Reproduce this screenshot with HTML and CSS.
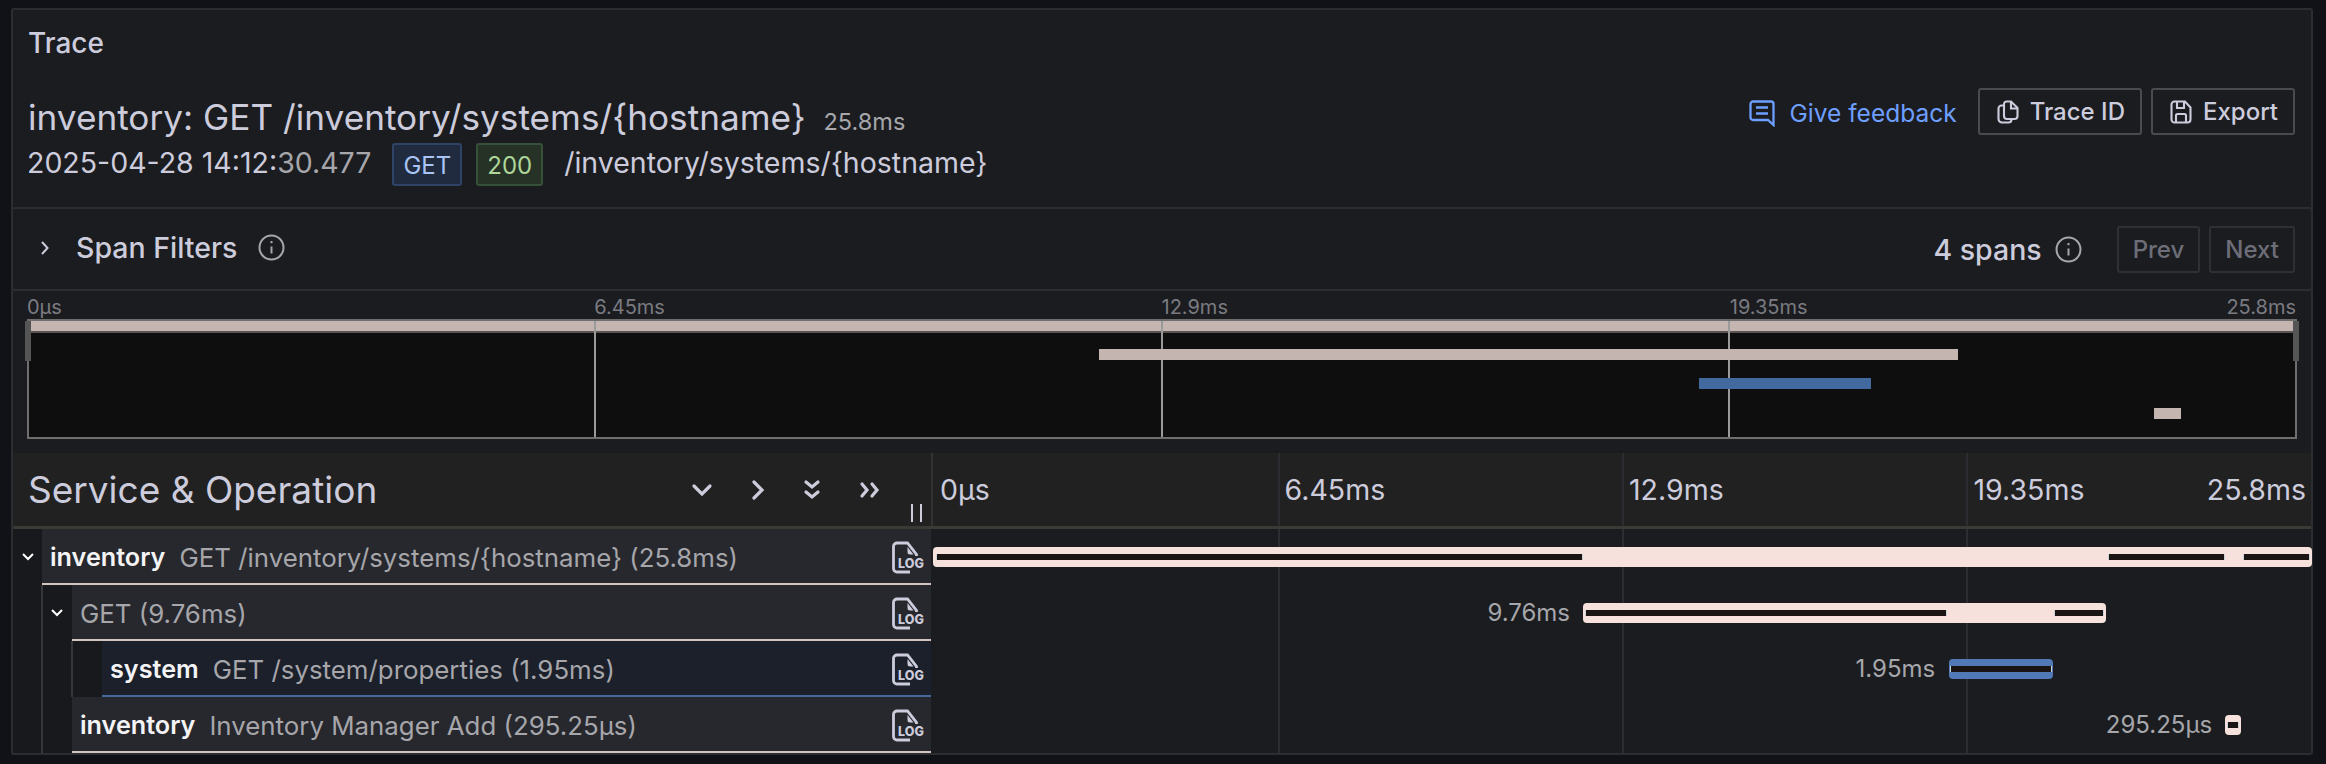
FILE: index.html
```html
<!DOCTYPE html>
<html lang="en">
<head>
  <meta charset="UTF-8">
  <meta name="viewport" content="width=device-width, initial-scale=1.0">
  <title>Trace</title>
  <link rel="stylesheet" href="styles.css">
</head>
<body>

  <main class="panel">
    <h2 class="panel-title">Trace</h2>

    <header class="trace-head">
      <div class="trace-info">
        <div class="trace-name">inventory: GET /inventory/systems/{hostname} <small>25.8ms</small></div>
        <div class="trace-meta">
          <span class="trace-date">2025-04-28 14:12:<em>30.477</em></span>
          <span class="tag tag-blue">GET</span>
          <span class="tag tag-green">200</span>
          <span class="trace-path">/inventory/systems/{hostname}</span>
        </div>
      </div>
      <div class="trace-actions">
        <a class="feedback">
          <svg width="28" height="28" viewBox="0 0 28 28" fill="none" stroke="currentColor" stroke-width="2.300"><path d="M5 2.500h18a2.500 2.500 0 0 1 2.500 2.500v21l-5.500-5H5A2.500 2.500 0 0 1 2.500 18.500V5A2.500 2.500 0 0 1 5 2.500Z"/><path d="M8 8.500h12M8 14.500h12"/></svg>
          Give feedback
        </a>
        <button class="btn">
          <svg width="22" height="24" viewBox="0 0 22 24" fill="none" stroke="currentColor" stroke-width="2.100"><path d="M7 5.500H4.500A3 3 0 0 0 1.500 8.500V19a3.500 3.500 0 0 0 3.500 3.500h6.500a3 3 0 0 0 3-3V19"/><path d="M7 4a2.500 2.500 0 0 1 2.500-2.500H14L20.500 8V16a3 3 0 0 1-3 3H10A3 3 0 0 1 7 16Z"/><path d="M14 2v6.500h6"/></svg>
          Trace ID
        </button>
        <button class="btn">
          <svg width="22" height="24" viewBox="0 0 22 24" fill="none" stroke="currentColor" stroke-width="2.100"><path d="M4.500 1.500H15L20.500 7.500V19.500a3 3 0 0 1-3 3H4.500a3 3 0 0 1-3-3V4.500a3 3 0 0 1 3-3Z"/><path d="M7 2v6h7V2"/><path d="M6 22v-6.500a1.500 1.500 0 0 1 1.500-1.500h7a1.500 1.500 0 0 1 1.500 1.500V22"/></svg>
          Export
        </button>
      </div>
    </header>

    <section class="filters">
      <div class="filters-left">
        <svg class="chev" width="12" height="16" viewBox="0 0 12 16" fill="none" stroke="currentColor" stroke-width="2"><path d="M3 2l5.500 6-5.500 6"/></svg>
        <span>Span Filters</span>
        <svg class="info" width="27" height="27" viewBox="0 0 27 27" fill="none" stroke="#a6a6ab" stroke-width="2"><circle cx="13.500" cy="13.500" r="12"/><path d="M13.500 12.500v7M13.500 7v2.200"/></svg>
      </div>
      <div class="filters-right">
        <span class="span-count">4 spans</span>
        <svg class="info" width="27" height="27" viewBox="0 0 27 27" fill="none" stroke="#a6a6ab" stroke-width="2"><circle cx="13.500" cy="13.500" r="12"/><path d="M13.500 12.500v7M13.500 7v2.200"/></svg>
        <button class="btn btn-off prev">Prev</button>
        <button class="btn btn-off">Next</button>
      </div>
    </section>

    <section class="mini">
      <div class="ticks mini-ticks">
        <span>0µs</span><span>6.45ms</span><span>12.9ms</span>
        <div class="ticks-end"><span>19.35ms</span><span>25.8ms</span></div>
      </div>
      <svg class="mini-map" width="2270" height="120" viewBox="0 0 2270 120">
        <rect x="1" y="1" width="2268" height="118" fill="#0e0e0e" stroke="#6e6e6e" stroke-width="2"/>
        <rect x="2" y="2" width="2266" height="10" fill="#c4b5b0"/>
        <rect x="2" y="12" width="2266" height="2" fill="#5a5452"/>
        <path d="M568 2v116M1135 2v116M1702 2v116" stroke="#9a9a9a" stroke-width="2"/>
        <rect x="1072" y="30" width="859" height="11" fill="#c4b5b0"/>
        <rect x="1672" y="59" width="172" height="11" fill="#436a9f"/>
        <rect x="2127" y="89" width="27" height="11" fill="#c4b5b0"/>
        <rect x="-2" y="2" width="6" height="40" fill="#555"/>
        <rect x="2266" y="2" width="6" height="40" fill="#555"/>
      </svg>
    </section>

    <section class="trace">
      <div class="trace-row trace-header">
        <div class="name-col head-name">
          <h3>Service &amp; Operation</h3>
          <div class="collapse-icons">
            <svg width="22" height="14" viewBox="0 0 22 14" fill="none" stroke="currentColor" stroke-width="3.200" stroke-linecap="round"><path d="M3 3l8 8 8-8"/></svg>
            <svg width="14" height="22" viewBox="0 0 14 22" fill="none" stroke="currentColor" stroke-width="3.200" stroke-linecap="round"><path d="M3 3l8 8-8 8"/></svg>
            <svg width="18" height="22" viewBox="0 0 18 22" fill="none" stroke="currentColor" stroke-width="3.200" stroke-linecap="round"><path d="M3 3l6 5 6-5M3 13l6 5 6-5"/></svg>
            <svg width="22" height="18" viewBox="0 0 22 18" fill="none" stroke="currentColor" stroke-width="3.200" stroke-linecap="round"><path d="M3 3l5 6-5 6M13 3l5 6-5 6"/></svg>
          </div>
          <i class="resizer"></i>
        </div>
        <div class="time-col ticks time-ticks">
          <span>0µs</span><span>6.45ms</span><span>12.9ms</span>
          <div class="ticks-end"><span>19.35ms</span><span>25.8ms</span></div>
        </div>
      </div>

      <div class="trace-row span-row">
        <div class="name-col">
          <div class="gutter gutter-1"><svg class="caret" width="14" height="10" viewBox="0 0 14 10" fill="none" stroke="currentColor" stroke-width="2"><path d="M2 2l5 5 5-5"/></svg></div>
          <div class="span-name pale">
            <b>inventory</b><span>GET /inventory/systems/{hostname} (25.8ms)</span>
            <svg class="log-icon" viewBox="0 0 32 32"><path d="M18 30H5a3.500 3.500 0 0 1-3.500-3.500V4.500A3.500 3.500 0 0 1 5 1H15.500L24.500 12.500V14" fill="none" stroke="currentColor" stroke-width="2.800"/><path d="M15.500 5 21.500 12.500H18a2.500 2.500 0 0 1-2.500-2.500Z" fill="currentColor"/><text x="6" y="25.500">LOG</text></svg>
          </div>
        </div>
        <div class="time-col">
          <div class="bar" style="left:0%;width:100.1%">
            <i style="left:0.2%;width:46.9%"></i><i style="left:85.2%;width:8.5%"></i><i style="left:95%;width:4.8%"></i>
          </div>
        </div>
      </div>

      <div class="trace-row span-row">
        <div class="name-col">
          <div class="gutter gutter-2"><u></u><svg class="caret" width="14" height="10" viewBox="0 0 14 10" fill="none" stroke="currentColor" stroke-width="2"><path d="M2 2l5 5 5-5"/></svg></div>
          <div class="span-name pale">
            <span>GET (9.76ms)</span>
            <svg class="log-icon" viewBox="0 0 32 32"><path d="M18 30H5a3.500 3.500 0 0 1-3.500-3.500V4.500A3.500 3.500 0 0 1 5 1H15.500L24.500 12.500V14" fill="none" stroke="currentColor" stroke-width="2.800"/><path d="M15.500 5 21.500 12.500H18a2.500 2.500 0 0 1-2.500-2.500Z" fill="currentColor"/><text x="6" y="25.500">LOG</text></svg>
          </div>
        </div>
        <div class="time-col">
          <span class="bar-label" style="right:52.9%">9.76ms</span>
          <div class="bar" style="left:47.2%;width:37.9%">
            <i style="left:0.4%;width:69.3%"></i><i style="left:90.2%;width:9.4%"></i>
          </div>
        </div>
      </div>

      <div class="trace-row span-row">
        <div class="name-col">
          <div class="gutter gutter-3"><u></u><u></u></div>
          <div class="span-name blue">
            <b>system</b><span>GET /system/properties (1.95ms)</span>
            <svg class="log-icon" viewBox="0 0 32 32"><path d="M18 30H5a3.500 3.500 0 0 1-3.500-3.500V4.500A3.500 3.500 0 0 1 5 1H15.500L24.500 12.500V14" fill="none" stroke="currentColor" stroke-width="2.800"/><path d="M15.500 5 21.500 12.500H18a2.500 2.500 0 0 1-2.500-2.500Z" fill="currentColor"/><text x="6" y="25.500">LOG</text></svg>
          </div>
        </div>
        <div class="time-col">
          <span class="bar-label" style="right:26.4%">1.95ms</span>
          <div class="bar bar-blue" style="left:73.7%;width:7.6%">
            <i style="left:1%;width:98%"></i>
          </div>
        </div>
      </div>

      <div class="trace-row span-row">
        <div class="name-col">
          <div class="gutter gutter-2"><u></u></div>
          <div class="span-name pale">
            <b>inventory</b><span>Inventory Manager Add (295.25µs)</span>
            <svg class="log-icon" viewBox="0 0 32 32"><path d="M18 30H5a3.500 3.500 0 0 1-3.500-3.500V4.500A3.500 3.500 0 0 1 5 1H15.500L24.500 12.500V14" fill="none" stroke="currentColor" stroke-width="2.800"/><path d="M15.500 5 21.500 12.500H18a2.500 2.500 0 0 1-2.500-2.500Z" fill="currentColor"/><text x="6" y="25.500">LOG</text></svg>
          </div>
        </div>
        <div class="time-col">
          <span class="bar-label" style="right:6.3%">295.25µs</span>
          <div class="bar" style="left:93.75%;width:1.2%">
            <i style="left:13%;width:74%"></i>
          </div>
        </div>
      </div>
    </section>
  </main>

</body>
</html>
```
FILE: styles.css
```css
* {
  box-sizing: border-box;
}

html, body {
  height: 100%;
}

body {
  margin: 0;
  background-color: #111217;
  color: #ccccdc;
  font-family: Inter, "Noto Sans", sans-serif;
  font-size: 24px;
  overflow: hidden;
}

.panel {
  margin: 8px 13px 0 11px;
  height: 747px;
  background-color: #1b1c20;
  border: 2px solid #2c2d31;
  border-radius: 3px;
}

.panel-title {
  margin: 0;
  padding: 17px 0 0 15px;
  font-size: 28px;
  font-weight: 500;
  line-height: 32px;
  height: 48px;
}

.trace-head {
  display: flex;
  justify-content: space-between;
  height: 149px;
  padding: 39px 16px 0 15px;
}

.trace-name {
  font-size: 35.200px;
  line-height: 40px;
  white-space: nowrap;
}

.trace-name small {
  font-size: 23.500px;
  color: #a6a6ab;
  margin-left: 8px;
}

.trace-meta {
  display: flex;
  align-items: center;
  margin: 1px 0 0 -1px;
  font-size: 28.500px;
  white-space: nowrap;
}

.trace-date {
  padding-bottom: 4px;
}

.trace-date em {
  font-style: normal;
  color: #a6a6ab;
}

.tag {
  height: 43px;
  line-height: 41px;
  padding: 0 9px;
  border-radius: 3px;
  font-size: 24px;
}

.tag-blue {
  margin-left: 21px;
  color: #a9c5f5;
  background-color: #212b40;
  border: 2px solid #2f4366;
}

.tag-green {
  margin-left: 14px;
  color: #aed69a;
  background-color: #263226;
  border: 2px solid #37503a;
}

.trace-path {
  margin-left: 21px;
  padding-bottom: 4px;
}

.trace-actions {
  display: flex;
  align-items: flex-start;
  margin-top: -9px;
}

.feedback {
  display: flex;
  align-items: center;
  gap: 14px;
  margin-top: 10px;
  margin-right: 21px;
  color: #6e9fff;
  font-size: 24.500px;
}

.btn {
  display: flex;
  align-items: center;
  gap: 11px;
  height: 47px;
  padding: 0 15px 0 17px;
  background: none;
  border: 2px solid #4a4b50;
  border-radius: 3px;
  color: #ccccdc;
  font-family: inherit;
  font-size: 24px;
  font-weight: 500;
}

.btn + .btn {
  margin-left: 9px;
}

.btn-off {
  border-color: #2f3034;
  color: #6d6e78;
  padding: 0 14px;
}

.filters {
  display: flex;
  justify-content: space-between;
  align-items: center;
  height: 84px;
  margin: 0 -2px;
  padding: 0 16px 0 26px;
  border: 2px solid #2c2d31;
  border-radius: 4px;
}

.filters-left {
  display: flex;
  align-items: center;
  padding-bottom: 3px;
  font-size: 28.500px;
  font-weight: 500;
}

.filters-left span {
  margin-left: 25px;
}

.filters-left .info {
  margin-left: 21px;
}

.filters-right {
  display: flex;
  align-items: center;
}

.span-count {
  font-size: 28.500px;
  font-weight: 500;
  margin-right: 13px;
}

.prev {
  margin-left: 35px;
}

.mini {
  padding: 0 15px 0 14px;
  height: 162px;
}

.ticks {
  display: grid;
  grid-template-columns: repeat(4, 1fr);
}

.ticks-end {
  display: flex;
  justify-content: space-between;
}

.mini-ticks {
  height: 28px;
  padding: 5px 0 0;
  font-size: 20px;
  line-height: 22px;
  color: #7a7b80;
}

.mini-ticks .ticks-end {
  padding-left: 1px;
}

.mini-map {
  display: block;
  overflow: visible;
}

.trace-row {
  display: flex;
}

.name-col {
  display: flex;
  flex: 0 0 920px;
  position: relative;
}

.time-col {
  flex: 1;
  position: relative;
  background-image: linear-gradient(#2c2d31, #2c2d31), linear-gradient(#2c2d31, #2c2d31), linear-gradient(#2c2d31, #2c2d31);
  background-repeat: no-repeat;
  background-size: 2px 100%;
  background-position: calc(25% + 1px) 0, calc(50% + 1px) 0, calc(75% + 1px) 0;
}

.trace-header {
  height: 76px;
  background-color: #212121;
  border-bottom: 3px solid #3a3a37;
}

.head-name {
  align-items: center;
  justify-content: space-between;
  padding: 0 0 0 15px;
  border-right: 2px solid #333;
}

.head-name h3 {
  margin: 0;
  font-size: 37px;
  font-weight: 400;
}

.collapse-icons {
  display: flex;
  align-items: center;
  gap: 38px;
  margin-right: 50px;
}

.resizer {
  position: absolute;
  right: 9px;
  bottom: 4px;
  width: 11px;
  height: 18px;
  border-left: 2px solid #ccccdc;
  border-right: 2px solid #ccccdc;
}

.time-ticks {
  align-items: center;
  font-size: 28.500px;
  background-color: #212121;
}

.time-ticks > span,
.time-ticks .ticks-end {
  padding-left: 7px;
}

.time-ticks .ticks-end {
  padding-right: 5px;
}

.span-row {
  height: 56px;
}

.gutter {
  display: flex;
  align-items: center;
  flex: none;
  color: #fff;
  background-color: #18191d;
}

.gutter u {
  flex: none;
  align-self: stretch;
  width: 30px;
  text-decoration: none;
  border-right: 2px solid #35363a;
}

.gutter-1 {
  width: 29px;
  padding-left: 8px;
}

.gutter-2 {
  width: 59px;
}

.gutter-3 {
  width: 89px;
}

.gutter-2 .caret {
  margin-left: 7px;
}

.span-name {
  flex: 1;
  display: flex;
  align-items: center;
  position: relative;
  padding: 2px 0 0 8px;
  color: #a6a6ab;
  font-size: 25.850px;
  margin-right: 2px;
}

.span-name b {
  color: #f4f4f6;
  font-size: 25.200px;
  font-weight: 600;
  margin-right: 14px;
}

.pale {
  background-color: #27282d;
  border-bottom: 2px solid #d4c4bf;
}

.blue {
  background-color: #1b202a;
  border-bottom: 2px solid #46699c;
}

.log-icon {
  position: absolute;
  right: 7px;
  top: 13px;
  width: 32px;
  height: 32px;
  overflow: visible;
  color: #ccccdc;
}

.log-icon text {
  font-family: Inter, sans-serif;
  font-size: 12.500px;
  font-weight: 800;
  fill: currentColor;
}

.bar {
  position: absolute;
  top: 18px;
  height: 20px;
  border-radius: 4px;
  background-color: #f6e1dc;
}

.bar i {
  position: absolute;
  top: 7px;
  height: 6px;
  background-color: #1a1512;
  border-left: 1px solid #c9d3dc;
  border-right: 1px solid #c9d3dc;
}

.bar-blue {
  background-color: #5079b5;
}

.bar-label {
  position: absolute;
  top: 13px;
  margin-right: 12px;
  color: #a6a6ab;
}
```
